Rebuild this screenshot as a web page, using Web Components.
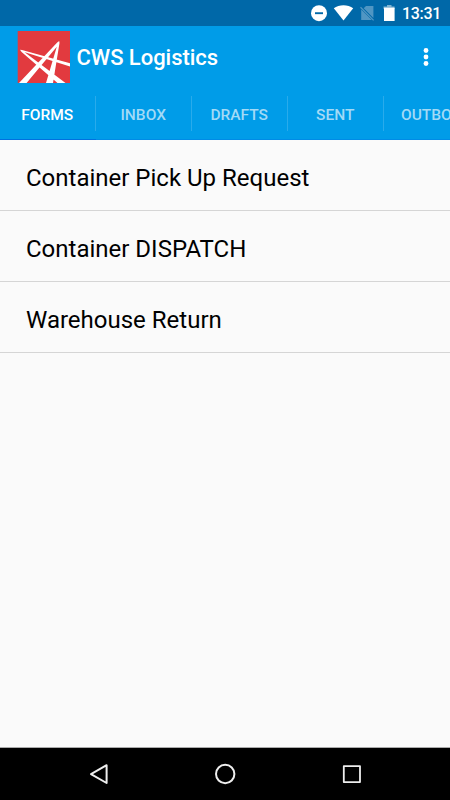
<!DOCTYPE html>
<html lang="en">
<head>
<meta charset="utf-8">
<title>CWS Logistics</title>
<style>
html, body { margin: 0; height: 100%; }
body { font-family: Roboto, "Noto Sans", sans-serif; background: #fafafa; overflow: hidden; }
</style>
</head>
<body>
<phone-screen>
  <status-bar slot="top">13:31</status-bar>
  <app-header slot="top">CWS Logistics</app-header>
  <tab-strip slot="top">
    <tab-item active>FORMS</tab-item><tab-item>INBOX</tab-item><tab-item>DRAFTS</tab-item><tab-item>SENT</tab-item><tab-item>OUTBOX</tab-item>
  </tab-strip>
  <form-row>Container Pick Up Request</form-row>
  <form-row>Container DISPATCH</form-row>
  <form-row>Warehouse Return</form-row>
  <nav-bar slot="bottom"></nav-bar>
</phone-screen>
<script>
const define = (name, html) => customElements.define(name, class extends HTMLElement {
  constructor() {
    super();
    this.attachShadow({ mode: 'open' }).innerHTML = html;
  }
});

define('phone-screen', `
<style>
:host { display: flex; flex-direction: column; width: 450px; height: 800px; background: #fafafa; overflow: hidden; }
main { flex: 1; min-height: 0; }
</style>
<slot name="top"></slot><main><slot></slot></main><slot name="bottom"></slot>`);

define('status-bar', `
<style>
:host { display: flex; align-items: center; justify-content: flex-end; box-sizing: border-box; height: 26px; padding: 2px 9px 0 0; background: #0068a8; color: #fff; font-size: 16px; font-weight: 500; line-height: 26px; }
svg { display: block; margin-top: -2px; }
span { width: 39px; margin-left: 5px; white-space: nowrap; letter-spacing: -.3px; }
</style>
<svg width="88" height="26" viewBox="309 0 88 26">
  <circle cx="319" cy="13.2" r="8" fill="#fff"/><path d="M315 13.2h8" stroke="#0068a8" stroke-width="1.9"/>
  <path d="M343.5 20.6 333.8 8.3C339 4.1 348 4.1 353.2 8.3Z" fill="#fff"/>
  <path d="M366 6H373.4V18L363.7 8.3ZM361.2 9.4 371.8 20H361.2Z" fill="#5096c3"/>
  <path d="M360.5 7.2 373.6 20.4" stroke="#5096c3" stroke-width="1.3"/>
  <path d="M387 5h4.5v1.5h3V9h-11V6.5H387Z" fill="#7fb3d2"/><path d="M384 7.7h10.6V21H384Z" fill="#fff"/>
</svg><span><slot></slot></span>`);

define('app-header', `
<style>
:host { display: flex; align-items: center; box-sizing: border-box; height: 62px; padding: 0 18px 0 17px; background: #009ce8; color: #fff; font-size: 22px; font-weight: 500; }
.title { flex: 1; margin-left: 5.5px; padding-top: 1px; white-space: nowrap; letter-spacing: -.04px; }
svg { display: block; }
</style>
<svg width="54" height="54" viewBox="17 30 54 54">
  <path d="M17.7 31H70V83H17.7Z" fill="#e23a3f"/>
  <path d="M59.2 41 57.2 42.6 19 83H26.6L59.5 43.5ZM59.2 41 57.9 43 46 83H53L59.5 43ZM20 49.8 22.5 51.5 70 66.5V63.3L22 49.9ZM20 49.8 21.6 52 57.5 83H65.5L23 50.9Z" fill="#fff"/>
</svg>
<div class="title"><slot></slot></div>
<svg width="12" height="24" viewBox="0 0 12 24"><g fill="#fff"><circle cx="6" cy="5.5" r="2.4"/><circle cx="6" cy="12" r="2.4"/><circle cx="6" cy="18.5" r="2.4"/></g></svg>`);

define('tab-strip', `
<style>
:host { display: flex; box-sizing: border-box; height: 52px; background: #009ce8; overflow: hidden; }
</style><slot></slot>`);

define('tab-item', `
<style>
:host { display: grid; place-items: center; flex: 0 0 96px; box-sizing: border-box; height: 52px; padding: 2px 1.6px 0 0; border-bottom: 1px solid #008be6; color: #a3daf6; font-size: 15.5px; font-weight: 500; line-height: 50px; background: linear-gradient(#29abeb, #29abeb) 95px 8px / 1px 35px no-repeat; }
:host([active]) { color: #fff; border-bottom-color: #0070e0; }
</style><slot></slot>`);

define('form-row', `
<style>
:host { display: flex; align-items: center; box-sizing: border-box; height: 71px; padding: 6px 26px 0; border-bottom: 1px solid #d5d5d5; color: #000; font-size: 24px; line-height: 30px; white-space: nowrap; }
</style><slot></slot>`);

define('nav-bar', `
<style>
:host { display: block; box-sizing: border-box; height: 53px; border-top: 1px solid #aaa; background: #000; }
svg { display: block; }
</style>
<svg width="450" height="52" viewBox="0 748 450 52" fill="none" stroke="#eee" stroke-width="2" stroke-linejoin="round">
  <path d="M106.6 765.2V783L91 774.1Z"/><circle cx="225.2" cy="774" r="9.2"/><path d="M343.8 766.2H360V782.1H343.8Z" stroke-width="1.8"/>
</svg>`);
</script>
</body>
</html>
